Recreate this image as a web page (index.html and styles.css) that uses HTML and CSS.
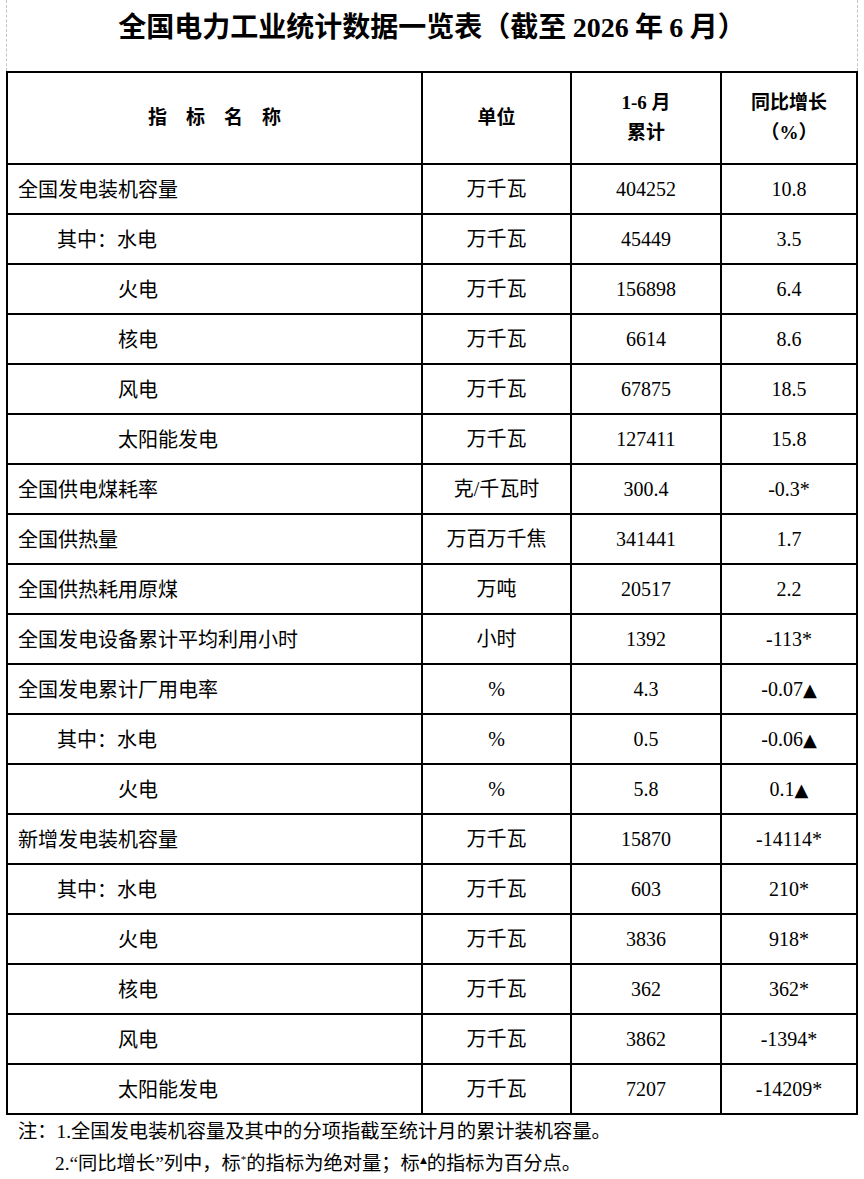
FILE: index.html
```html
<!DOCTYPE html>
<html lang="zh-CN">
<head>
<meta charset="utf-8">
<title>全国电力工业统计数据一览表</title>
<link rel="stylesheet" href="styles.css">
</head>
<body>
<div class="page">
  <div class="title-block">
    <h1 class="title">全国电力工业统计数据一览表（截至 <span class="num">2026</span> 年 <span class="num">6</span> 月）</h1>
  </div>
  <table class="stats">
    <colgroup>
      <col class="c-name">
      <col class="c-unit">
      <col class="c-val">
      <col class="c-yoy">
    </colgroup>
    <thead>
      <tr>
        <th class="h-name"><span class="spaced"><span>指</span><span>标</span><span>名</span><span>称</span></span></th>
        <th>单位</th>
        <th><span class="num">1-6</span> 月<br>累计</th>
        <th>同比增长<br>（<span class="num">%</span>）</th>
      </tr>
    </thead>
    <tbody>
      <tr><td class="name l0">全国发电装机容量</td><td>万千瓦</td><td>404252</td><td>10.8</td></tr>
      <tr><td class="name l1">其中：水电</td><td>万千瓦</td><td>45449</td><td>3.5</td></tr>
      <tr><td class="name l2">火电</td><td>万千瓦</td><td>156898</td><td>6.4</td></tr>
      <tr><td class="name l2">核电</td><td>万千瓦</td><td>6614</td><td>8.6</td></tr>
      <tr><td class="name l2">风电</td><td>万千瓦</td><td>67875</td><td>18.5</td></tr>
      <tr><td class="name l2">太阳能发电</td><td>万千瓦</td><td>127411</td><td>15.8</td></tr>
      <tr><td class="name l0">全国供电煤耗率</td><td>克/千瓦时</td><td>300.4</td><td>-0.3*</td></tr>
      <tr><td class="name l0">全国供热量</td><td>万百万千焦</td><td>341441</td><td>1.7</td></tr>
      <tr><td class="name l0">全国供热耗用原煤</td><td>万吨</td><td>20517</td><td>2.2</td></tr>
      <tr><td class="name l0">全国发电设备累计平均利用小时</td><td>小时</td><td>1392</td><td>-113*</td></tr>
      <tr><td class="name l0">全国发电累计厂用电率</td><td>%</td><td>4.3</td><td>-0.07<span class="tri">▲</span></td></tr>
      <tr><td class="name l1">其中：水电</td><td>%</td><td>0.5</td><td>-0.06<span class="tri">▲</span></td></tr>
      <tr><td class="name l2">火电</td><td>%</td><td>5.8</td><td>0.1<span class="tri">▲</span></td></tr>
      <tr><td class="name l0">新增发电装机容量</td><td>万千瓦</td><td>15870</td><td>-14114*</td></tr>
      <tr><td class="name l1">其中：水电</td><td>万千瓦</td><td>603</td><td>210*</td></tr>
      <tr><td class="name l2">火电</td><td>万千瓦</td><td>3836</td><td>918*</td></tr>
      <tr><td class="name l2">核电</td><td>万千瓦</td><td>362</td><td>362*</td></tr>
      <tr><td class="name l2">风电</td><td>万千瓦</td><td>3862</td><td>-1394*</td></tr>
      <tr><td class="name l2">太阳能发电</td><td>万千瓦</td><td>7207</td><td>-14209*</td></tr>
    </tbody>
  </table>
  <div class="notes">
    <p class="note">注：<span class="num">1.</span>全国发电装机容量及其中的分项指截至统计月的累计装机容量。</p>
    <p class="note note-2"><span class="num">2.“</span>同比增长<span class="num">”</span>列中，标<sup class="sup">*</sup>的指标为绝对量；标<sup class="sup sup-tri">▲</sup>的指标为百分点。</p>
  </div>
</div>
</body>
</html>
```

FILE: styles.css
```css
html, body {
  margin: 0;
  padding: 0;
  background: #fff;
}

body {
  font-family: "Liberation Serif", "Noto Sans CJK SC", serif;
  color: #000;
}

.page {
  width: 852px;
  margin-left: 6px;
}

.title-block {
  height: 71px;
  box-sizing: border-box;
  border-left: 1px dashed #c4c4c4;
  border-right: 1px dashed #c4c4c4;
  padding-top: 8px;
}

.title {
  margin: 0;
  text-align: center;
  font-family: "Noto Sans CJK SC", sans-serif;
  font-weight: 700;
  font-size: 28px;
  line-height: 34px;
}

.title .num {
  font-family: "Liberation Serif", serif;
  font-weight: 700;
}

.num {
  font-family: "Liberation Serif", serif;
}

.stats {
  width: 852px;
  border-collapse: collapse;
  table-layout: fixed;
  border: 2px solid #000;
}

.c-name { width: 415px; }
.c-unit { width: 149px; }
.c-val { width: 150px; }
.c-yoy { width: 136px; }

.stats th,
.stats td {
  border: 2px solid #000;
  padding: 0;
  text-align: center;
  vertical-align: middle;
  font-size: 20px;
}

.stats thead tr {
  height: 92px;
}

.stats th {
  font-family: "Liberation Serif", "Noto Sans CJK SC", serif;
  font-weight: 700;
  line-height: 30px;
  font-size: 19px;
}

.spaced {
  display: inline-flex;
  gap: 1em;
}

.stats tbody tr {
  height: 50px;
}

.stats td {
  line-height: 26px;
}

.stats td.name {
  text-align: left;
  font-family: "Noto Sans CJK SC", sans-serif;
}

.stats td.l0 { padding-left: 10px; }
.stats td.l1 { padding-left: 49px; }
.stats td.l2 { padding-left: 110px; }

.tri {
  font-family: "DejaVu Sans", sans-serif;
  font-size: 18px;
}

.notes {
  font-family: "Noto Sans CJK SC", sans-serif;
  font-size: 19.3px;
}

.note {
  margin: 0;
  line-height: 30px;
  padding-left: 12px;
}

.note-2 {
  padding-left: 49px;
}

.sup {
  font-family: "Liberation Serif", serif;
  font-size: 11px;
  vertical-align: 0;
  position: relative;
  top: -7px;
}

.sup-tri {
  font-family: "DejaVu Sans", sans-serif;
  font-size: 9px;
}
```
